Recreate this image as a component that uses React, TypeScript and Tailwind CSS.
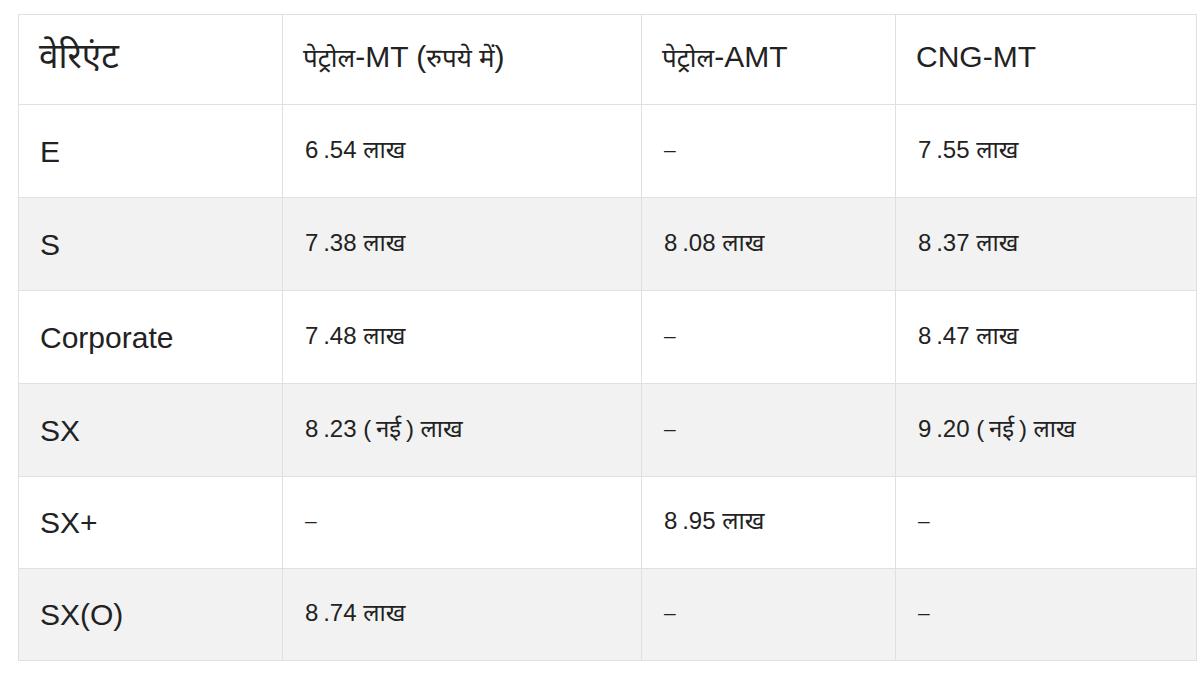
import type { ReactNode } from 'react';

const D = ({ children }: { children: ReactNode }) => <span className="text-[26px]">{children}</span>;

const headers: ReactNode[] = [
  <span className="text-[35px]">वेरिएंट</span>,
  <>
    <D>पेट्रोल</D>-MT (<D>रुपये में</D>)
  </>,
  <>
    <D>पेट्रोल</D>-AMT
  </>,
  <>CNG-MT</>,
];

const rows: string[][] = [
  ['E', '6\u2009.54 लाख', '–', '7\u2009.55 लाख'],
  ['S', '7\u2009.38 लाख', '8\u2009.08 लाख', '8\u2009.37 लाख'],
  ['Corporate', '7\u2009.48 लाख', '–', '8\u2009.47 लाख'],
  ['SX', '8\u2009.23 (\u2009नई\u2009) लाख', '–', '9\u2009.20 (\u2009नई\u2009) लाख'],
  ['SX+', '–', '8\u2009.95 लाख', '–'],
  ['SX(O)', '8\u2009.74 लाख', '–', '–'],
];

const font = "font-['Liberation_Sans','Noto_Sans_Devanagari','Lohit_Devanagari',sans-serif]";

export default function App() {
  return (
    <div className="h-[675px] w-[1200px] bg-white pl-[18px] pt-[14px]">
      <table className={`w-[1178px] table-fixed border-collapse text-[#222] ${font}`}>
        <colgroup>
          <col className="w-[264px]" />
          <col className="w-[359px]" />
          <col className="w-[254px]" />
          <col className="w-[301px]" />
        </colgroup>
        <thead>
          <tr className="h-[90px] bg-white">
            {headers.map((h, i) => (
              <th
                key={i}
                className="border border-[#e0e0e0] pb-[6px] pl-[20px] text-left align-middle text-[30px] font-normal"
              >
                {h}
              </th>
            ))}
          </tr>
        </thead>
        <tbody>
          {rows.map((row, i) => (
            <tr
              key={row[0]}
              className={`${i < 4 ? 'h-[93px]' : 'h-[92px]'} ${i % 2 === 1 ? 'bg-[#f2f2f2]' : 'bg-white'}`}
            >
              {row.map((cell, j) => (
                <td
                  key={j}
                  className={
                    j === 0
                      ? 'border border-[#e0e0e0] pl-[21px] align-middle text-[30px]'
                      : cell === '–'
                        ? 'border border-[#e0e0e0] pb-[3px] pl-[22px] align-middle text-[21px]'
                        : 'border border-[#e0e0e0] pb-[3px] pl-[22px] align-middle text-[24px]'
                  }
                >
                  {cell}
                </td>
              ))}
            </tr>
          ))}
        </tbody>
      </table>
    </div>
  );
}
